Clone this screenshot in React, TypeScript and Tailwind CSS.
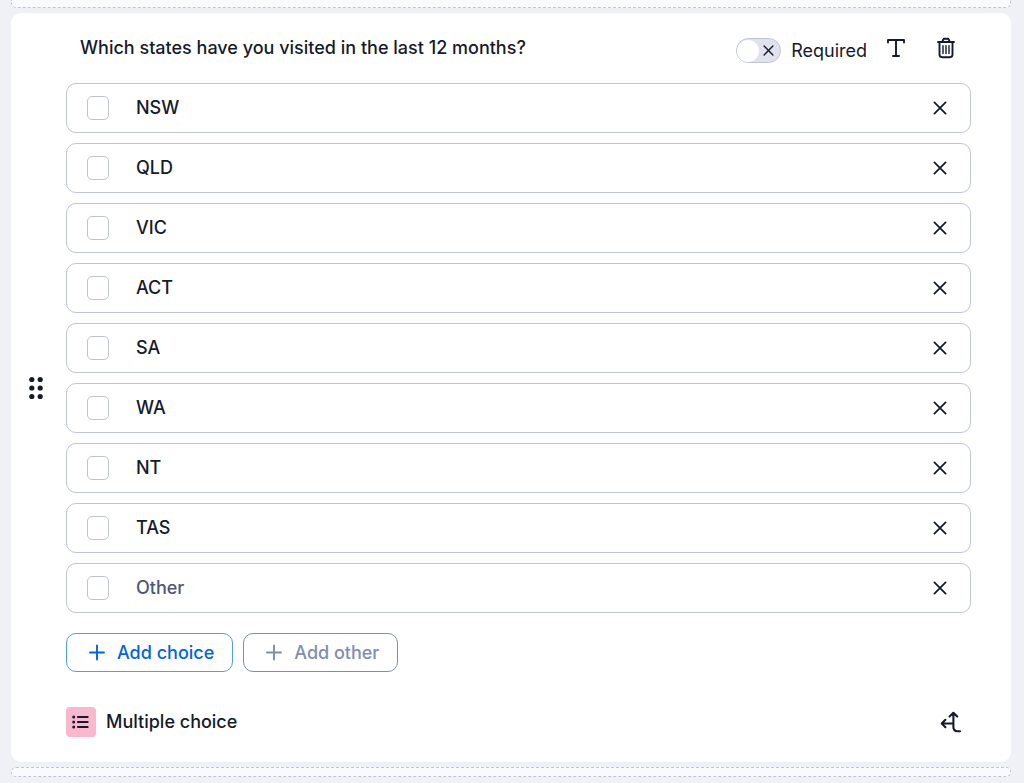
import { useState } from 'react';

interface Choice {
  id: number;
  label: string;
  isOther?: boolean;
}

const initialChoices: Choice[] = [
  { id: 1, label: 'NSW' },
  { id: 2, label: 'QLD' },
  { id: 3, label: 'VIC' },
  { id: 4, label: 'ACT' },
  { id: 5, label: 'SA' },
  { id: 6, label: 'WA' },
  { id: 7, label: 'NT' },
  { id: 8, label: 'TAS' },
  { id: 9, label: 'Other', isOther: true },
];

function CloseIcon({ className }: { className: string }) {
  return (
    <svg className={className} viewBox="0 0 14 14" fill="none" stroke="currentColor" strokeWidth={1.8} strokeLinecap="round" aria-hidden="true">
      <path d="M1.4 1.4l11.2 11.2M12.6 1.4L1.4 12.6" />
    </svg>
  );
}

function PlusIcon() {
  return (
    <svg className="h-5 w-5" viewBox="0 0 20 20" fill="none" stroke="currentColor" strokeWidth={1.9} strokeLinecap="round" aria-hidden="true">
      <path d="M10 2.5v14M3 9.5h14" />
    </svg>
  );
}

interface ChoiceRowProps {
  choice: Choice;
  onChange: (label: string) => void;
  onRemove: () => void;
}

function ChoiceRow({ choice, onChange, onRemove }: ChoiceRowProps) {
  return (
    <li className="flex h-[50px] items-center rounded-[10px] border border-[#bfc4d8] px-5">
      <input
        type="checkbox"
        aria-label={choice.label}
        className="h-6 w-[22px] shrink-0 appearance-none rounded-[5px] border border-[#bfc4d8] bg-white checked:bg-[#0065e0]"
      />
      <input
        type="text"
        aria-label="Choice text"
        value={choice.label}
        onChange={(e) => onChange(e.target.value)}
        className={`ml-[27px] min-w-0 flex-1 bg-transparent text-lg font-medium outline-none ${
          choice.isOther ? 'text-[#4b5878]' : 'text-[#161b2b]'
        }`}
      />
      <button
        type="button"
        onClick={onRemove}
        aria-label={`Remove ${choice.label}`}
        className="flex h-5 w-5 items-center justify-center"
      >
        <CloseIcon className="h-[14px] w-[14px]" />
      </button>
    </li>
  );
}

export default function App() {
  const [question, setQuestion] = useState('Which states have you visited in the last 12 months?');
  const [required, setRequired] = useState(false);
  const [choices, setChoices] = useState(initialChoices);

  const addChoice = (label: string, isOther = false) => {
    setChoices([...choices, { id: Date.now(), label, isOther }]);
  };

  return (
    <main className="min-h-screen bg-[#eff1f6] pr-[13px] pl-[11px] font-[Inter,sans-serif] text-[#161b2b]">
      {/* Drop zone above */}
      <div className="h-2 rounded-b-[5px] border border-t-0 border-dashed border-[#bfc4d6] bg-[#f9fafc]" />

      <section className="mt-[5px] flex rounded-[10px] bg-white pr-10">
        <button type="button" aria-label="Move question" className="mr-[5px] flex w-[50px] shrink-0 cursor-grab items-center justify-center">
          <svg className="h-6 w-4" viewBox="0 0 16 24" fill="currentColor" aria-hidden="true">
            <circle cx="3.8" cy="3.5" r="2.6" />
            <circle cx="12.2" cy="3.5" r="2.6" />
            <circle cx="3.8" cy="12" r="2.6" />
            <circle cx="12.2" cy="12" r="2.6" />
            <circle cx="3.8" cy="20.5" r="2.6" />
            <circle cx="12.2" cy="20.5" r="2.6" />
          </svg>
        </button>

        <div className="min-w-0 flex-1 pb-[25px]">
          {/* Question header */}
          <header className="flex h-[70px] items-center">
            <input
              type="text"
              aria-label="Question"
              value={question}
              onChange={(e) => setQuestion(e.target.value)}
              className="min-w-0 flex-1 bg-transparent pl-[14px] text-lg font-medium outline-none"
            />
            <label className="flex cursor-pointer items-center gap-[10px] pt-[5px] text-lg">
              <input
                type="checkbox"
                role="switch"
                checked={required}
                onChange={(e) => setRequired(e.target.checked)}
                className="peer sr-only"
              />
              <span className="flex h-[25px] w-[45px] items-center justify-between rounded-full border border-[#bfc4dc] bg-[#e0e3ee] pr-[6px] peer-checked:flex-row-reverse peer-checked:bg-[#9cc4ff]">
                <span className="h-[22px] w-[22px] rounded-full bg-white" />
                <CloseIcon className="h-[11px] w-[11px]" />
              </span>
              Required
            </label>
            <button type="button" aria-label="Text options" className="ml-1 flex h-10 w-[50px] items-center justify-center">
              <svg className="h-5 w-5" viewBox="0 0 20 20" fill="none" stroke="currentColor" strokeWidth={1.9} strokeLinecap="round" strokeLinejoin="round" aria-hidden="true">
                <path d="M2 4.6V2h16v2.6M10 2v16M7 18h6" />
              </svg>
            </button>
            <button type="button" aria-label="Delete question" className="flex h-10 w-[50px] items-center justify-center">
              <svg className="h-[22px] w-5" viewBox="0 0 20 22" fill="none" stroke="currentColor" strokeWidth={1.9} strokeLinecap="round" strokeLinejoin="round" aria-hidden="true">
                <path d="M2 5h16M3.5 5v12.6a2.6 2.6 0 002.6 2.6h7.8a2.6 2.6 0 002.6-2.6V5M6.3 4.6l1-2.1a1.2 1.2 0 011.1-.7h3.2a1.2 1.2 0 011.1.7l1 2.1" />
                <path strokeWidth={1.4} d="M7 8.6v8M10 8.6v8M13 8.6v8" />
              </svg>
            </button>
          </header>

          <ul className="flex flex-col gap-[10px]">
            {choices.map((choice) => (
              <ChoiceRow
                key={choice.id}
                choice={choice}
                onChange={(label) => setChoices(choices.map((c) => (c.id === choice.id ? { ...c, label } : c)))}
                onRemove={() => setChoices(choices.filter((c) => c.id !== choice.id))}
              />
            ))}
          </ul>

          <div className="mt-5 flex gap-[10px]">
            <button
              type="button"
              onClick={() => addChoice('')}
              className="flex h-[39px] items-center gap-[10px] rounded-[10px] border border-[#4f9cf5] pr-[18px] pl-5 text-lg font-medium text-[#0065e0]"
            >
              <PlusIcon />
              Add choice
            </button>
            <button
              type="button"
              onClick={() => addChoice('Other', true)}
              className="flex h-[39px] items-center gap-[10px] rounded-[10px] border border-[#7f8db5] pr-[18px] pl-5 text-lg font-medium text-[#7f8db5]"
            >
              <PlusIcon />
              Add other
            </button>
          </div>

          {/* Question type */}
          <footer className="mt-[35px] flex items-center">
            <span className="flex h-[30px] w-[30px] items-center justify-center rounded bg-[#f8b9cf]">
              <svg className="h-[14px] w-[18px]" viewBox="0 0 18 14" fill="none" stroke="currentColor" strokeWidth={2.2} strokeLinecap="round" aria-hidden="true">
                <path d="M6 2h9.6M6 7h9.6M6 12h9.6" />
                <path strokeWidth={3} d="M1.7 2h.01M1.7 7h.01M1.7 12h.01" />
              </svg>
            </span>
            <span className="ml-[10px] text-lg font-medium">Multiple choice</span>
            <button type="button" aria-label="Branching logic" className="ml-auto flex h-[30px] w-10 items-center justify-center">
              <svg className="h-[22px] w-[22px]" viewBox="0 0 22 22" fill="none" stroke="currentColor" strokeWidth={2.1} strokeLinecap="round" strokeLinejoin="round" aria-hidden="true">
                <path d="M20 20.2h-2.4c-2.8 0-4.2-1.5-4.2-4.2V2M9.6 5.6l3.8-3.8 3.8 3.8M13.4 12.5H2M5.4 8.8L1.7 12.5l3.7 3.7" />
              </svg>
            </button>
          </footer>
        </div>
      </section>

      {/* Drop zone below */}
      <div className="mt-[5px] h-[10px] rounded-[5px] border border-dashed border-[#bfc4d6] bg-[#f9fafc]" />
    </main>
  );
}
